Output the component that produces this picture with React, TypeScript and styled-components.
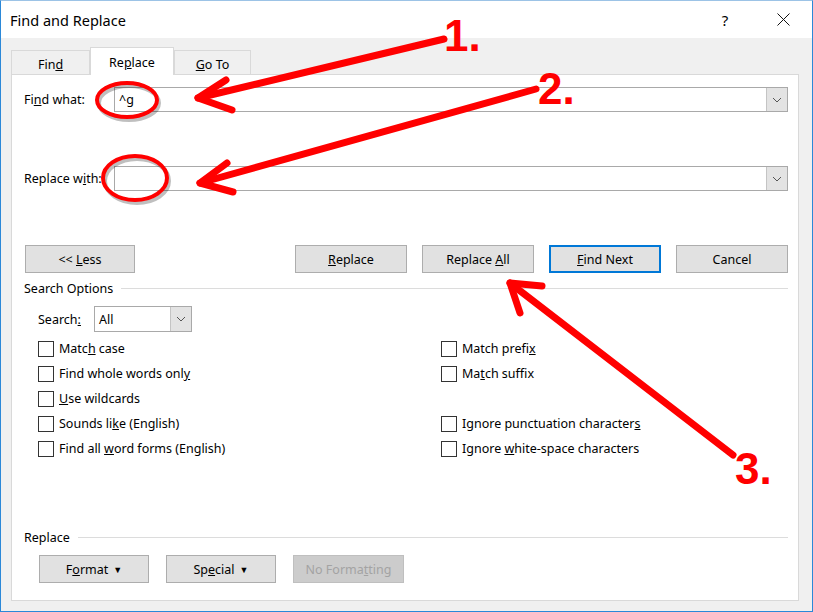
import React from 'react';
import styled, { createGlobalStyle } from 'styled-components';

const GlobalStyle = createGlobalStyle`
  body {
    margin: 0;
    font-family: 'Noto Sans', 'Open Sans', sans-serif;
    font-size: 12px;
    color: #000;
  }
`;

const Window = styled.div`
  position: relative;
  width: 813px;
  height: 612px;
  box-sizing: border-box;
  border: 1px solid #2b88d8;
  border-top-color: #9cc3e6;
  display: flex;
  flex-direction: column;
  background: #f0f0f0;
  overflow: hidden;
`;

const TitleBar = styled.div`
  height: 37px;
  background: #fff;
  display: flex;
  align-items: center;
  padding-left: 9px;
  flex: none;
`;

const Title = styled.div`
  flex: 1;
  font-size: 14.5px;
`;

const TitleButton = styled.div<{ $gap: number }>`
  width: 46px;
  height: 37px;
  display: flex;
  align-items: center;
  justify-content: center;
  margin-right: ${(p) => p.$gap}px;
  font-size: 15px;
`;

const Body = styled.div`
  flex: 1;
  display: flex;
  flex-direction: column;
  padding: 9px 13px 10px 10px;
`;

const TabRow = styled.div`
  display: flex;
  align-items: flex-end;
  height: 27px;
`;

const Tab = styled.div<{ $active?: boolean; $width: number }>`
  width: ${(p) => p.$width}px;
  height: ${(p) => (p.$active ? 28 : 24)}px;
  box-sizing: border-box;
  display: flex;
  align-items: center;
  justify-content: center;
  padding-top: ${(p) => (p.$active ? 1 : 3)}px;
  background: ${(p) => (p.$active ? '#fff' : '#f0f0f0')};
  border: 1px solid #d9d9d9;
  border-bottom: none;
  margin-bottom: ${(p) => (p.$active ? -1 : 0)}px;
  position: relative;
  z-index: ${(p) => (p.$active ? 2 : 1)};
  font-size: 12.5px;
`;

const Panel = styled.div`
  flex: 1;
  background: #fff;
  border: 1px solid #d9d9d9;
  padding: 12px 10px 17px 12px;
  display: flex;
  flex-direction: column;
`;

const FieldRow = styled.div<{ $top: number }>`
  display: flex;
  align-items: center;
  height: 25px;
  margin-top: ${(p) => p.$top}px;
`;

const FieldLabel = styled.div`
  width: 90px;
  flex: none;
  font-size: 12.5px;
`;

const Combo = styled.div<{ $width?: number }>`
  ${(p) => (p.$width ? `width: ${p.$width}px;` : 'flex: 1;')}
  height: 100%;
  box-sizing: border-box;
  border: 1px solid #a9a9a9;
  display: flex;
  align-items: stretch;
  background: #fff;
`;

const ComboValue = styled.div`
  flex: 1;
  display: flex;
  align-items: center;
  padding-left: 4px;
  font-size: 12.5px;
`;

const ComboArrow = styled.div`
  width: 20px;
  flex: none;
  background: #e3e3e3;
  border-left: 1px solid #c4c4c4;
  display: flex;
  align-items: center;
  justify-content: center;
`;

const ButtonRow = styled.div<{ $top: number; $indent?: number; $gap?: number }>`
  display: flex;
  align-items: center;
  gap: ${(p) => p.$gap ?? 15}px;
  margin-top: ${(p) => p.$top}px;
  padding-left: ${(p) => p.$indent ?? 0}px;
`;

const Button = styled.div<{ $primary?: boolean; $disabled?: boolean; $width?: number }>`
  width: ${(p) => p.$width ?? 112}px;
  height: 28px;
  box-sizing: border-box;
  display: flex;
  align-items: center;
  justify-content: center;
  gap: 5px;
  background: ${(p) => (p.$disabled ? '#cccccc' : '#e1e1e1')};
  border: ${(p) => (p.$primary ? '2px solid #0078d7' : p.$disabled ? '1px solid #bfbfbf' : '1px solid #adadad')};
  color: ${(p) => (p.$disabled ? '#a3a3a3' : '#000')};
  font-size: 12.5px;
`;

const Spacer = styled.div`
  flex: 1;
`;

const Heading = styled.div<{ $top: number }>`
  display: flex;
  align-items: center;
  gap: 8px;
  height: 16px;
  margin-top: ${(p) => p.$top}px;
  font-size: 12.5px;

  &::after {
    content: '';
    flex: 1;
    height: 1px;
    background: #dcdcdc;
  }
`;

const SearchRow = styled.div`
  display: flex;
  align-items: center;
  height: 26px;
  margin-top: 10px;
  padding-left: 14px;
`;

const SearchLabel = styled.div`
  width: 56px;
  font-size: 12.5px;
`;

const OptionGrid = styled.div`
  display: grid;
  grid-template-columns: 403px 1fr;
  grid-auto-rows: 25px;
  margin-top: 4px;
  padding-left: 14px;
`;

const Option = styled.label`
  display: flex;
  align-items: center;
  gap: 5px;
  font-size: 12.5px;
`;

const Check = styled.span`
  width: 16px;
  height: 16px;
  box-sizing: border-box;
  border: 1px solid #333;
  background: #fff;
  flex: none;
`;

const Caret = styled.span`
  font-size: 9px;
  line-height: 1;
`;

const Overlay = styled.svg`
  position: absolute;
  left: -1px;
  top: -1px;
  width: 813px;
  height: 612px;
  pointer-events: none;
  z-index: 10;
`;

const Chevron = () => (
  <svg width="10" height="6" viewBox="0 0 10 6">
    <path d="M1 1 L5 5 L9 1" fill="none" stroke="#555" strokeWidth="1" />
  </svg>
);

const Arrow = ({ from, tip, wings }: { from: [number, number]; tip: [number, number]; wings: [number, number][] }) => (
  <g stroke="#ff0000" strokeWidth="7" strokeLinecap="round" strokeLinejoin="round" fill="none">
    <line x1={from[0]} y1={from[1]} x2={tip[0]} y2={tip[1]} />
    <polyline points={`${wings[0][0]},${wings[0][1]} ${tip[0]},${tip[1]} ${wings[1][0]},${wings[1][1]}`} />
  </g>
);

const Ring = ({ cx, cy, rx, ry }: { cx: number; cy: number; rx: number; ry: number }) => (
  <g fill="none">
    <ellipse cx={cx + 2} cy={cy + 3} rx={rx} ry={ry} stroke="rgba(0,0,0,0.25)" strokeWidth="4" />
    <ellipse cx={cx} cy={cy} rx={rx} ry={ry} stroke="#ff0000" strokeWidth="4" />
  </g>
);

const leftOptions = [
  <>Matc<u>h</u> case</>,
  <>Find whole words onl<u>y</u></>,
  <><u>U</u>se wildcards</>,
  <>Sounds li<u>k</u>e (English)</>,
  <>Find all <u>w</u>ord forms (English)</>,
];

const rightOptions = [
  <>Match prefi<u>x</u></>,
  <>Ma<u>t</u>ch suffix</>,
  null,
  <>Ignore punctuation character<u>s</u></>,
  <>Ignore <u>w</u>hite-space characters</>,
];

export default function App() {
  return (
    <>
      <GlobalStyle />
      <Window>
        <TitleBar>
          <Title>Find and Replace</Title>
          <TitleButton $gap={12}>?</TitleButton>
          <TitleButton $gap={6}>
            <svg width="13" height="13" viewBox="0 0 13 13">
              <path d="M0.5 0.5 L12.5 12.5 M12.5 0.5 L0.5 12.5" stroke="#111" strokeWidth="1" />
            </svg>
          </TitleButton>
        </TitleBar>
        <Body>
          <TabRow>
            <Tab $width={79}><span>Fin<u>d</u></span></Tab>
            <Tab $width={84} $active><span>Re<u>p</u>lace</span></Tab>
            <Tab $width={77}><span><u>G</u>o To</span></Tab>
          </TabRow>
          <Panel>
            <FieldRow $top={0}>
              <FieldLabel>Fi<u>n</u>d what:</FieldLabel>
              <Combo>
                <ComboValue>^g</ComboValue>
                <ComboArrow><Chevron /></ComboArrow>
              </Combo>
            </FieldRow>
            <FieldRow $top={54}>
              <FieldLabel>Replace w<u>i</u>th:</FieldLabel>
              <Combo>
                <ComboValue />
                <ComboArrow><Chevron /></ComboArrow>
              </Combo>
            </FieldRow>
            <ButtonRow $top={54} $indent={1}>
              <Button $width={110}><span>&lt;&lt; <u>L</u>ess</span></Button>
              <Spacer />
              <Button><span><u>R</u>eplace</span></Button>
              <Button><span>Replace <u>A</u>ll</span></Button>
              <Button $primary><span><u>F</u>ind Next</span></Button>
              <Button><span>Cancel</span></Button>
            </ButtonRow>
            <Heading $top={7}>Search Options</Heading>
            <SearchRow>
              <SearchLabel>Search<u>:</u></SearchLabel>
              <Combo $width={98}>
                <ComboValue>All</ComboValue>
                <ComboArrow><Chevron /></ComboArrow>
              </Combo>
            </SearchRow>
            <OptionGrid>
              {leftOptions.map((l, i) => (
                <React.Fragment key={i}>
                  <Option><Check /><span>{l}</span></Option>
                  {rightOptions[i] ? <Option><Check /><span>{rightOptions[i]}</span></Option> : <div />}
                </React.Fragment>
              ))}
            </OptionGrid>
            <Spacer />
            <Heading $top={0}>Replace</Heading>
            <ButtonRow $top={10} $indent={15} $gap={17}>
              <Button $width={110}><span>F<u>o</u>rmat</span><Caret>▼</Caret></Button>
              <Button $width={110}><span>Sp<u>e</u>cial</span><Caret>▼</Caret></Button>
              <Button $width={111} $disabled><span>No Forma<u>t</u>ting</span></Button>
            </ButtonRow>
          </Panel>
        </Body>
        <Overlay viewBox="0 0 813 612">
          <Ring cx={127} cy={100} rx={30} ry={17} />
          <Ring cx={135} cy={178} rx={32} ry={22} />
          <Arrow from={[444, 39]} tip={[198, 98]} wings={[[226, 80], [232, 110]]} />
          <Arrow from={[536, 89]} tip={[200, 183]} wings={[[227, 163], [233, 192]]} />
          <Arrow from={[733, 455]} tip={[510, 283]} wings={[[542, 286], [520, 313]]} />
          <g fill="#ff0000" fontFamily="'Liberation Sans', Arial, sans-serif" fontWeight="bold" fontSize="44">
            <text x="444" y="51">1.</text>
            <text x="538" y="104">2.</text>
            <text x="735" y="484">3.</text>
          </g>
        </Overlay>
      </Window>
    </>
  );
}
